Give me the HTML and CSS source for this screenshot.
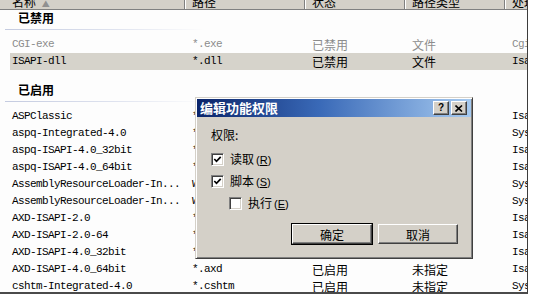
FILE: index.html
```html
<!DOCTYPE html>
<html lang="zh-CN">
<head>
    <meta charset="UTF-8">
    <title>处理程序映射</title>
    <link rel="stylesheet" href="styles.css">
</head>
<body>

    <div class="window">
        <!-- Handler list -->
        <div class="list-head">
            <div class="col"><span>名称 <i class="sort">▲</i></span></div>
            <div class="col"><span>路径</span></div>
            <div class="col"><span>状态</span></div>
            <div class="col"><span>路径类型</span></div>
            <div class="col"><span>处理</span></div>
        </div>

        <div class="group">已禁用</div>
        <div class="row disabled">
            <div class="name mono">CGI-exe</div>
            <div class="path mono">*.exe</div>
            <div class="cn">已禁用</div>
            <div class="cn">文件</div>
            <div class="mono">CgiModule</div>
        </div>
        <div class="row selected">
            <div class="name mono">ISAPI-dll</div>
            <div class="path mono">*.dll</div>
            <div class="cn">已禁用</div>
            <div class="cn">文件</div>
            <div class="mono">IsapiModule</div>
        </div>

        <div class="group enabled">已启用</div>
        <div class="row">
            <div class="name mono">ASPClassic</div>
            <div class="path mono">*.asp</div>
            <div class="cn">已启用</div>
            <div class="cn">文件</div>
            <div class="mono">IsapiModule</div>
        </div>
        <div class="row">
            <div class="name mono">aspq-Integrated-4.0</div>
            <div class="path mono">*.aspq</div>
            <div class="cn">已启用</div>
            <div class="cn">未指定</div>
            <div class="mono">System.Web</div>
        </div>
        <div class="row">
            <div class="name mono">aspq-ISAPI-4.0_32bit</div>
            <div class="path mono">*.aspq</div>
            <div class="cn">已启用</div>
            <div class="cn">未指定</div>
            <div class="mono">IsapiModule</div>
        </div>
        <div class="row">
            <div class="name mono">aspq-ISAPI-4.0_64bit</div>
            <div class="path mono">*.aspq</div>
            <div class="cn">已启用</div>
            <div class="cn">未指定</div>
            <div class="mono">IsapiModule</div>
        </div>
        <div class="row">
            <div class="name mono">AssemblyResourceLoader-In...</div>
            <div class="path mono">WebResource.axd</div>
            <div class="cn">已启用</div>
            <div class="cn">未指定</div>
            <div class="mono">System.Web</div>
        </div>
        <div class="row">
            <div class="name mono">AssemblyResourceLoader-In...</div>
            <div class="path mono">WebResource.axd</div>
            <div class="cn">已启用</div>
            <div class="cn">未指定</div>
            <div class="mono">System.Web</div>
        </div>
        <div class="row">
            <div class="name mono">AXD-ISAPI-2.0</div>
            <div class="path mono">*.axd</div>
            <div class="cn">已启用</div>
            <div class="cn">未指定</div>
            <div class="mono">IsapiModule</div>
        </div>
        <div class="row">
            <div class="name mono">AXD-ISAPI-2.0-64</div>
            <div class="path mono">*.axd</div>
            <div class="cn">已启用</div>
            <div class="cn">未指定</div>
            <div class="mono">IsapiModule</div>
        </div>
        <div class="row">
            <div class="name mono">AXD-ISAPI-4.0_32bit</div>
            <div class="path mono">*.axd</div>
            <div class="cn">已启用</div>
            <div class="cn">未指定</div>
            <div class="mono">IsapiModule</div>
        </div>
        <div class="row">
            <div class="name mono">AXD-ISAPI-4.0_64bit</div>
            <div class="path mono">*.axd</div>
            <div class="cn">已启用</div>
            <div class="cn">未指定</div>
            <div class="mono">IsapiModule</div>
        </div>
        <div class="row">
            <div class="name mono">cshtm-Integrated-4.0</div>
            <div class="path mono">*.cshtm</div>
            <div class="cn">已启用</div>
            <div class="cn">未指定</div>
            <div class="mono">System.Web</div>
        </div>

        <!-- Edit feature permissions dialog -->
        <div class="dialog">
            <div class="title-bar">
                <span class="title">编辑功能权限</span>
                <div class="caption-buttons">
                    <div class="cap-btn help">?</div>
                    <div class="cap-btn">
                        <svg width="8" height="7" viewBox="0 0 8 7">
                            <path d="M0.5 0.5 L7 6.5 M7 0.5 L0.5 6.5" stroke="#000" stroke-width="1.6"/>
                        </svg>
                    </div>
                </div>
            </div>
            <div class="dialog-body">
                <div class="label">权限:</div>
                <div class="checks">
                    <label class="check">
                        <span class="box">
                            <svg width="9" height="9" viewBox="0 0 9 9"><polyline points="1.3,4 3.5,6.3 7.7,1.8" fill="none" stroke="#000" stroke-width="1.7"/></svg>
                        </span>
                        <span>读取<span class="key">(<u>R</u>)</span></span>
                    </label>
                    <label class="check">
                        <span class="box">
                            <svg width="9" height="9" viewBox="0 0 9 9"><polyline points="1.3,4 3.5,6.3 7.7,1.8" fill="none" stroke="#000" stroke-width="1.7"/></svg>
                        </span>
                        <span>脚本<span class="key">(<u>S</u>)</span></span>
                    </label>
                    <label class="check indent">
                        <span class="box"></span>
                        <span>执行<span class="key">(<u>E</u>)</span></span>
                    </label>
                </div>
                <div class="buttons">
                    <button class="btn default">确定</button>
                    <button class="btn">取消</button>
                </div>
            </div>
        </div>
    </div>

</body>
</html>
```

FILE: styles.css
```css
body {
    margin: 0;
    background-color: #fff;
    font-family: "Noto Sans CJK SC", "Noto Sans", sans-serif;
    font-size: 12px;
    color: #000;
}

.window {
    position: relative;
    width: 527px;
    height: 292px;
    overflow: hidden;
    background-color: #fdfdfd;
    border-right: 1px solid #3c3c3c;
    border-bottom: 2px solid #4a4a4a;
}

/* List header (scrolled so only the lower half shows) */
.list-head {
    display: grid;
    grid-template-columns: 185px 120px 100px 100px 1fr;
    height: 9px;
    overflow: hidden;
    background-color: #d4d0c8;
    border-bottom: 1px solid #808080;
}

.list-head .col {
    padding-left: 7px;
    border-right: 1px solid #808080;
    box-shadow: inset 1px 0 #fff;
    white-space: nowrap;
}

.list-head .col:first-child {
    padding-left: 12px;
    box-shadow: none;
}

.list-head .col span {
    display: block;
    margin-top: -6px;
    line-height: 16px;
}

.sort {
    font-style: normal;
    font-size: 8px;
    color: #909090;
    margin-left: 3px;
}

/* Groups */
.group {
    box-sizing: border-box;
    height: 20px;
    padding: 1px 0 0 18px;
    margin-bottom: 6px;
    line-height: 14px;
    font-weight: bold;
    font-size: 12px;
    background: linear-gradient(to right, #c4cbe0, #dfe3ef 55%, #fdfdfd) no-repeat left 5px bottom / 200px 1px;
}

.group.enabled {
    height: 21px;
    padding-top: 2px;
    margin-top: 11px;
}

/* Rows */
.row {
    display: grid;
    grid-template-columns: 175px 120px 100px 100px 1fr;
    height: 17px;
    line-height: 17px;
    margin-left: 10px;
}

.row > div {
    padding-left: 7px;
    white-space: nowrap;
    overflow: hidden;
}

.row > .name {
    padding-left: 2px;
}

.row.selected {
    background-color: #d6d3cb;
}

.row.disabled {
    color: #8c8c8c;
}

.mono {
    font-family: "Liberation Mono", monospace;
    font-size: 11px;
    letter-spacing: -0.6px;
}

.cn {
    font-size: 12px;
}

/* Dialog */
.dialog {
    position: absolute;
    left: 195px;
    top: 97px;
    width: 278px;
    height: 162px;
    box-sizing: border-box;
    padding: 1px;
    background-color: #d4d0c8;
    border: 1px solid;
    border-color: #d4d0c8 #404040 #404040 #d4d0c8;
    box-shadow: inset 1px 1px #fff, inset -1px -1px #808080;
}

.title-bar {
    display: flex;
    align-items: center;
    height: 18px;
    padding: 0 4px 0 3px;
    background: linear-gradient(to right, #0a246a, #3a6ab8 45%, #a6caf0);
}

.title {
    color: #fff;
    font-weight: bold;
    font-size: 13px;
    line-height: 18px;
}

.caption-buttons {
    display: flex;
    gap: 2px;
    margin-left: auto;
}

.cap-btn {
    display: flex;
    align-items: center;
    justify-content: center;
    width: 14px;
    height: 12px;
    background-color: #d4d0c8;
    border: 1px solid;
    border-color: #fff #404040 #404040 #fff;
    box-shadow: inset -1px -1px #808080;
    font-family: "Liberation Sans", sans-serif;
    font-weight: bold;
    font-size: 10px;
    line-height: 12px;
}

.dialog-body {
    padding: 11px 13px 0 14px;
}

.label {
    line-height: 14px;
}

.checks {
    display: flex;
    flex-direction: column;
    gap: 8px;
    margin-top: 10px;
}

.check {
    display: flex;
    align-items: center;
    gap: 6px;
    height: 14px;
    line-height: 14px;
}

.check.indent {
    margin-left: 18px;
}

.key {
    margin-left: 2px;
    font-family: "Liberation Sans", sans-serif;
    font-size: 11px;
}

.key u {
    text-decoration: underline;
}

.box {
    display: flex;
    align-items: center;
    justify-content: center;
    box-sizing: border-box;
    width: 13px;
    height: 13px;
    background-color: #fff;
    border: 1px solid;
    border-color: #808080 #fff #fff #808080;
    box-shadow: inset 1px 1px #404040, inset -1px -1px #d4d0c8;
}

.buttons {
    display: flex;
    justify-content: flex-end;
    gap: 6px;
    margin-top: 14px;
}

.btn {
    box-sizing: border-box;
    width: 80px;
    height: 20px;
    padding: 0;
    background-color: #d4d0c8;
    border: 1px solid;
    border-color: #fff #404040 #404040 #fff;
    box-shadow: inset -1px -1px #808080;
    font-family: "Noto Sans CJK SC", sans-serif;
    font-size: 12px;
    color: #000;
}

.btn.default {
    outline: 1px solid #000;
    outline-offset: 0;
}
```
